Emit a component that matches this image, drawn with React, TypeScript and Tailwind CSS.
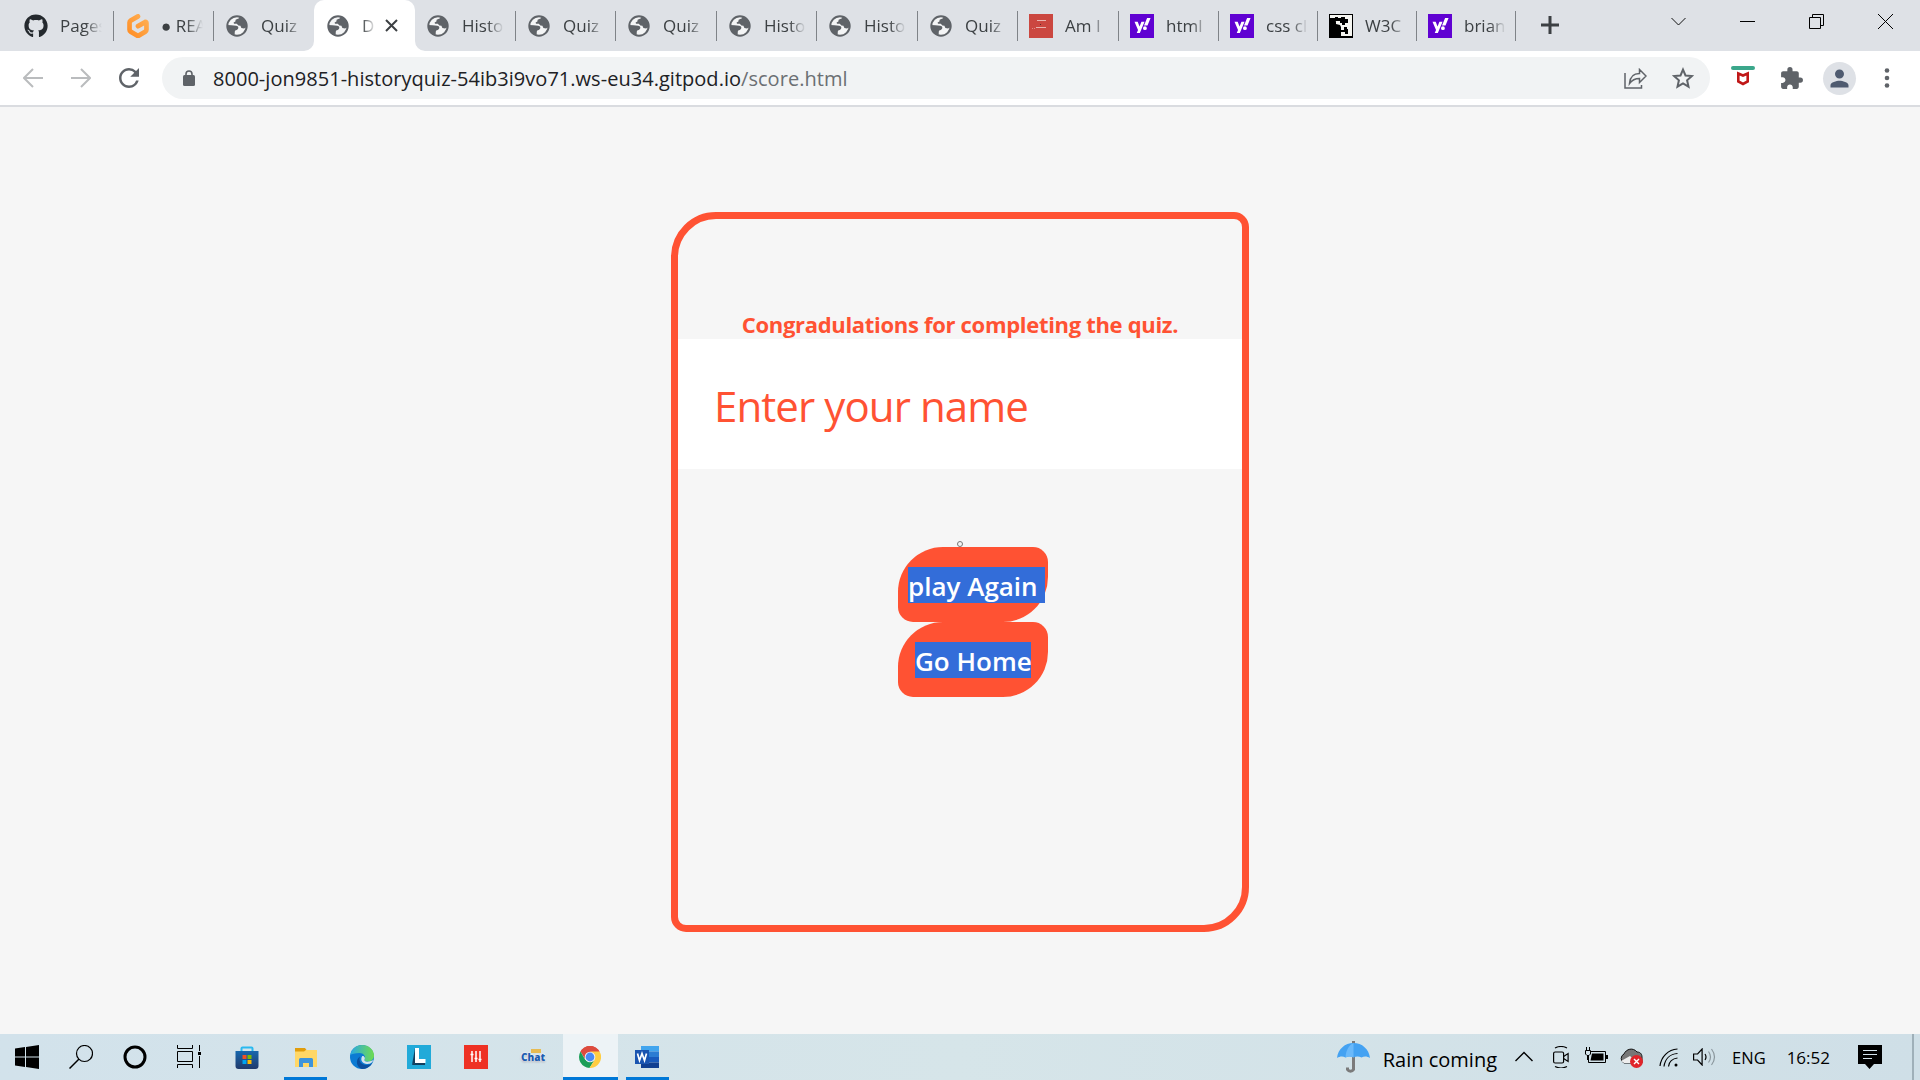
import { type ReactNode } from "react";
import { SiGitpod } from "react-icons/si";
import { FaGithub, FaYahoo } from "react-icons/fa";
import { MdExtension, MdPerson, MdRefresh } from "react-icons/md";

function Globe() {
  return (
    <svg className="ml-px size-[22px]" viewBox="0 0 22 22" fill="#5f6368">
      <circle cx="11" cy="11" r="9.7" fill="#f4f5f6" stroke="#5f6368" strokeWidth="2" />
      <path d="M1 10 L5.5 10.2 L10.2 10.8 C12.6 11 13 13.4 11.4 14.6 C10.6 15.3 9.2 15.2 8.8 16.4 L8.6 20.6 C4 19.4 1 15 1 10Z" />
      <path d="M13.6 1.5 L13 3.2 L9.6 4.8 L9.4 6.6 L7.6 7.4 L8 8.8 L10.8 8.8 L12.4 10.4 L14.4 10.8 L15.4 13 L18 13.4 L21 12 C21.3 7 18 2.6 13.6 1.5Z" />
    </svg>
  );
}

function Yahoo() {
  return (
    <div className="flex size-6 items-center justify-center bg-[#6001d2]">
      <FaYahoo className="size-[17px] text-white" />
    </div>
  );
}

function Gitpod() {
  return (
    <>
      <svg className="absolute size-0">
        <linearGradient id="gitpod" x1="1" y1="0" x2="0" y2="1">
          <stop stopColor="#ffb45b" />
          <stop offset="1" stopColor="#ff8a1f" />
        </linearGradient>
      </svg>
      <SiGitpod className="ml-px size-6 fill-[url(#gitpod)]" />
    </>
  );
}

function RedMark() {
  return (
    <svg className="size-6" viewBox="0 0 24 24">
      <path fill="#cb4740" d="M0 0h24v24H0z" />
      <path stroke="#e9b5b0" d="M8 6.500h9M7 13.500h10" />
      <path stroke="#5c2a27" d="M11 10.500h1" />
      <path stroke="#e08a85" strokeDasharray="1 1" d="M3 14.500h4" />
    </svg>
  );
}

function W3CMark() {
  return (
    <svg className="size-6" viewBox="0 0 24 24">
      <path d="M0 0h24v24H0z" />
      <path fill="#f6f6f2" d="M1 1h22v21H12v-9l-1-2-4-1V8l-1-4H1z" />
      <path d="M6 3h3v1h3V3h4v2h3v4h-3v2h-3V9h-2V7H6zM15 13h3v2h1v5h-3v-2h-4v-2h3z" />
    </svg>
  );
}

type Tab = { icon: ReactNode; title: string; width: string; pad?: string; active?: boolean; line?: boolean };

const tabs: Tab[] = [
  { icon: <FaGithub className="size-6 text-[#24292e]" />, title: "Pages", width: "w-[114px]", pad: "pl-6", line: true },
  { icon: <Gitpod />, title: "● REA", width: "w-[100px]", pad: "pl-[11px]", line: true },
  { icon: <Globe />, title: "Quiz", width: "w-[100px]", pad: "pl-[11px]" },
  { icon: <Globe />, title: "D", width: "w-[101px]", active: true },
  { icon: <Globe />, title: "Histo", width: "w-[101px]", pad: "pl-[11px]", line: true },
  { icon: <Globe />, title: "Quiz", width: "w-[100px]", pad: "pl-[11px]", line: true },
  { icon: <Globe />, title: "Quiz", width: "w-[101px]", pad: "pl-[11px]", line: true },
  { icon: <Globe />, title: "Histo", width: "w-[100px]", pad: "pl-[11px]", line: true },
  { icon: <Globe />, title: "Histo", width: "w-[101px]", pad: "pl-[11px]", line: true },
  { icon: <Globe />, title: "Quiz", width: "w-[100px]", pad: "pl-[11px]", line: true },
  { icon: <RedMark />, title: "Am I", width: "w-[101px]", pad: "pl-[11px]", line: true },
  { icon: <Yahoo />, title: "html", width: "w-[100px]", pad: "pl-[11px]", line: true },
  { icon: <Yahoo />, title: "css cl", width: "w-[99px]", pad: "pl-[11px]", line: true },
  { icon: <W3CMark />, title: "W3C", width: "w-[99px]", pad: "pl-[11px]", line: true },
  { icon: <Yahoo />, title: "brian", width: "w-[99px]", pad: "pl-[11px]", line: true },
];

function TabItem({ tab }: { tab: Tab }) {
  if (tab.active) {
    return (
      <div className="relative flex h-full w-[101px] items-center rounded-t-[10px] bg-white pl-3">
        <svg className="absolute bottom-0 -left-[10px] size-[10px]" viewBox="0 0 10 10"><path fill="#fff" d="M10 0v10H0A10 10 0 0 0 10 0Z" /></svg>
        <svg className="absolute -right-[10px] bottom-0 size-[10px]" viewBox="0 0 10 10"><path fill="#fff" d="M0 0v10h10A10 10 0 0 1 0 0Z" /></svg>
        <div className="flex w-9 shrink-0"><Globe /></div>
        <span className="w-3 overflow-hidden text-[#3c4043] [mask-image:linear-gradient(to_right,black,rgba(0,0,0,.15))]">{tab.title}</span>
        <svg className="ml-[11px] size-[13px]" viewBox="0 0 13 13" stroke="#3c4043" strokeWidth="2"><path d="M1 1l11 11M12 1L1 12" /></svg>
      </div>
    );
  }
  return (
    <div className={`flex h-full shrink-0 items-center ${tab.width} ${tab.pad ?? "pl-3"}`}>
      <div className="w-9 shrink-0">{tab.icon}</div>
      <div className="w-[42px] overflow-hidden whitespace-nowrap text-[#3c4043] [mask-image:linear-gradient(to_right,black_60%,transparent)]">
        {tab.title}
      </div>
      {tab.line && <div className="ml-auto h-[30px] w-px bg-[#7f8388]" />}
    </div>
  );
}

function TabStrip() {
  return (
    <div className="flex h-[51px] bg-[#dee1e6] font-['Open_Sans',sans-serif] text-[17px] leading-6">
      {tabs.map((tab, i) => <TabItem key={i} tab={tab} />)}
      <svg className="mt-4 ml-[25px] size-[18px]" viewBox="0 0 18 18" stroke="#3c4043" strokeWidth="3"><path d="M9 0v18M0 9h18" /></svg>
      <div className="mr-[27px] ml-auto flex items-start gap-[54px] pt-3.5">
        <svg className="size-[15px]" viewBox="0 0 15 15" fill="none" stroke="#111"><path d="M0.500 4l7 7 7-7" /></svg>
        <svg className="size-[15px]" viewBox="0 0 15 15" fill="none" stroke="#000"><path d="M0 7.500h15" /></svg>
        <svg className="size-[15px]" viewBox="0 0 15 15" fill="none" stroke="#000"><path d="M.5 3.500h11v11h-11zM3.500 3V.5h11v11H12" /></svg>
        <svg className="size-[15px]" viewBox="0 0 15 15" fill="none" stroke="#000"><path d="M0 0l15 15M15 0L0 15" /></svg>
      </div>
    </div>
  );
}

function Toolbar() {
  return (
    <div className="flex h-14 items-start border-b-2 border-[#dadce0] bg-white pt-1.5">
      <div className="flex h-[42px] w-[162px] shrink-0 items-center">
        <svg className="ml-[23px] size-5" viewBox="0 0 20 20" fill="none" stroke="#babcbe" strokeWidth="2"><path d="M20 10H1.500M10 1L1 10l9 9" /></svg>
        <svg className="ml-7 size-5" viewBox="0 0 20 20" fill="none" stroke="#babcbe" strokeWidth="2"><path d="M0 10h18.500M10 1l9 9-9 9" /></svg>
        <MdRefresh className="ml-[23px] size-[30px] text-[#5f6368]" />
      </div>
      <div className="flex h-[42px] w-[1548px] shrink-0 items-center rounded-full bg-[#f1f3f4] pl-[21px]">
        <svg className="h-4 w-3" viewBox="0 0 12 16"><rect y="5" width="12" height="11" rx="1.500" fill="#5f6368" /><path d="M3 6V4a3 3 0 0 1 6 0v2" fill="none" stroke="#5f6368" strokeWidth="1.600" /></svg>
        <span className="ml-[18px] pt-0.5 font-['Open_Sans',sans-serif] text-[20px] leading-7 tracking-[0.03px] whitespace-pre text-[#202124]">
          8000-jon9851-historyquiz-54ib3i9vo71.ws-eu34.gitpod.io<span className="text-[#6b6f73]">/score.html</span>
        </span>
        <svg className="ml-auto h-[21px] w-[23px]" viewBox="0 0 23 21" fill="none" stroke="#5f6368" strokeWidth="1.500"><path d="M1 5v15h16.500v-3M5.500 15.500C6 9 9.500 5.500 15.500 5.500V1.500l6.500 6.500-6.500 6.500V10.500C11 10.500 8 12 5.500 15.500Z" /></svg>
        <svg className="mr-4 ml-[25px] size-[22px]" viewBox="0 0 22 22" fill="none" stroke="#5f6368" strokeWidth="2"><path d="M11 2.600l2.500 5.900 6.400.6-4.800 4.200 1.400 6.300L11 16.300l-5.500 3.300 1.400-6.300-4.800-4.200 6.400-.6z" /></svg>
      </div>
      <svg className="mt-[9px] ml-[21px] h-[20px] w-[24px]" viewBox="0 0 24 20"><rect width="24" height="4" rx="2" fill="#3ba78b" /><path d="M7.300 7.500l4.700 2 4.700-2v8L12 18l-4.700-2.500z" fill="none" stroke="#c01818" strokeWidth="2.600" /></svg>
      <MdExtension className="mt-[9px] ml-6 size-[25px] text-[#5f6368]" />
      <div className="mt-[5px] ml-[19px] flex size-[33px] items-center justify-center rounded-full bg-[#dee1e6]"><MdPerson className="size-[27px] text-[#4f5b70]" /></div>
      <svg className="mt-[11px] ml-7 h-5 w-[6px]" viewBox="0 0 6 20" fill="#5f6368"><circle cx="3" cy="2.500" r="2.300" /><circle cx="3" cy="10" r="2.300" /><circle cx="3" cy="17.500" r="2.300" /></svg>
    </div>
  );
}

function QuizPage() {
  return (
    <main className="h-[927px] bg-[#f6f6f6] pt-[105px] font-['Open_Sans',sans-serif]">
      <div className="ml-[671px] flex h-[720px] w-[578px] flex-col rounded-tl-[45px] rounded-tr-[15px] rounded-br-[45px] rounded-bl-[15px] border-[7px] border-[#ff5233]">
        <h2 className="mt-[90px] text-center text-[22px] leading-[30px] font-bold tracking-[-0.31px] whitespace-nowrap text-[#ff5233]">Congradulations for completing the quiz.</h2>
        <div className="h-[130px] bg-white pt-[6px] pl-9 text-[42px] leading-[122px] tracking-[-0.9px] text-[#ff5233]">Enter your name</div>
        <div className="mt-[72px] ml-[279px] size-[6px] rounded-full border border-[#777]" />
        <div className="ml-[220px] flex w-[150px] flex-col text-[26px] leading-9 font-semibold text-white">
          <button className="flex h-[75px] items-start rounded-tl-[45px] rounded-tr-[15px] rounded-br-[45px] rounded-bl-[15px] bg-[#ff5233] pt-5 pl-[10px]">
            <span className="h-9 w-[137px] shrink-0 bg-[#336dd9] pt-px text-left whitespace-pre">play Again </span>
          </button>
          <button className="flex h-[75px] items-start rounded-tl-[45px] rounded-tr-[15px] rounded-br-[45px] rounded-bl-[15px] bg-[#ff5233] pt-5 pl-[17px]">
            <span className="h-9 w-[116px] shrink-0 bg-[#336dd9] pt-px text-left whitespace-pre">Go Home</span>
          </button>
        </div>
      </div>
    </main>
  );
}

function Taskbar() {
  return (
    <footer className="flex h-[46px] bg-linear-to-r from-[#d2e2eb] via-[#d6e5e9] to-[#cfdfe7] font-['Open_Sans',sans-serif] text-black">
      <svg className="mt-[11px] ml-[15px] size-6" viewBox="0 0 24 24"><path d="M0 3.500L10 2v9.500H0zM11 1.900L24 0v11.500H11zM0 12.500h10V22L0 20.500zM11 12.500h13V24l-13-1.900z" /></svg>
      <svg className="mt-[11px] ml-[30px] size-6" viewBox="0 0 24 24" fill="none" stroke="#000" strokeWidth="1.200"><circle cx="15.500" cy="8.500" r="8" /><path d="M10 14L0.500 23.500" strokeWidth="1.500" /></svg>
      <svg className="mt-[11px] ml-[30px] size-6" viewBox="0 0 24 24" fill="none" stroke="#000" strokeWidth="3"><circle cx="12" cy="12" r="10" /></svg>
      <svg className="mt-[11px] ml-[30px] size-6" viewBox="0 0 24 24" fill="none" stroke="#000"><path d="M.5 0v3.500h15V0M.5 6.500h15v10H.500zM.5 23v-3.500h15V23M22.500 0v6M22.500 11v12" /><path d="M21 7h3v3h-3z" fill="#000" stroke="none" /></svg>
      <svg className="mt-[11px] ml-[34px] size-6" viewBox="0 0 24 24"><defs><linearGradient id="store" x1="0" y1="0" x2="0" y2="1"><stop stopColor="#1767ae" /><stop offset="1" stopColor="#213a6b" /></linearGradient></defs><path d="M6.500 7V3.500a1 1 0 0 1 1-1h9a1 1 0 0 1 1 1V7" fill="none" stroke="#29b9f0" strokeWidth="2" /><path d="M.500 6h23v15a3 3 0 0 1-3 3h-17a3 3 0 0 1-3-3z" fill="url(#store)" /><path fill="#f25022" d="M7.500 10h4v4h-4z" /><path fill="#7fba00" d="M12.500 10h4v4h-4z" /><path fill="#00a4ef" d="M7.500 15h4v4h-4z" /><path fill="#ffb900" d="M12.500 15h4v4h-4z" /></svg>
      <div className="ml-[25px] flex h-full w-[43px] flex-col items-center justify-between border-b-[3px] border-[#0078d7] pt-3">
        <svg className="h-[22px] w-[22px]" viewBox="0 0 22 22"><path fill="#e19d0c" d="M0 2h10l1.500 2-1.500 2H0z" /><path fill="#ffd766" d="M0 5.500h9l2-1.500h11v17H0z" /><path fill="#3c94dc" d="M4 21v-7.500a1.500 1.500 0 0 1 1.500-1.500h11a1.500 1.500 0 0 1 1.500 1.500V21h-4v-4H8v4z" /></svg>
      </div>
      <svg className="mt-[11px] ml-[23px] size-6" viewBox="0 0 24 24"><defs><linearGradient id="edge" x1="0" y1="0" x2="1" y2="0"><stop stopColor="#2aa8e6" /><stop offset="1" stopColor="#6fdc4c" /></linearGradient></defs><circle cx="12" cy="12" r="12" fill="#0c7bd3" /><path d="M.300 10C1.500 4 6.200 0 12 0c7 0 12 5 12 10.500 0 4-3 6-6.500 6-2.500 0-3.500-1-3-2 2-3-1-6.500-5-6.500C5 8 1.500 9 .300 10Z" fill="url(#edge)" /><path d="M10 11.500c-2 5 2 9 7 8.500 2 0 4-1 5.200-2C20 22 16 24 12 24c-5-1-7.500-9-2-12.500Z" fill="#0b4f9e" /><path d="M14.500 14.500c-1 2 3 3.500 9 .5-1.500 3.500-4 4-6.500 4-4.500 0-7-4-5-7.500 1-1.500 4 1 2.500 3Z" fill="#d4e3eb" /></svg>
      <svg className="mt-[11px] ml-[33px] size-6" viewBox="0 0 24 24"><path fill="#21aad9" d="M0 0h24v24H0z" /><path d="M8 3L5 20l3-2z" fill="#123f5e" /><path d="M5 20l4-3h9v3z" fill="#123f5e" /><path d="M8 3h4v11h6.500v4H8z" fill="#fff" /></svg>
      <svg className="mt-[11px] ml-[33px] size-6" viewBox="0 0 24 24"><path fill="#ee3124" d="M0 0h24v24H0z" /><path d="M8 6v11M12 6v11M16 6v11" stroke="#fff" strokeWidth="1.500" /><path d="M6.500 9.500h3M10.500 13.500h3M14.500 14.500h3" stroke="#fff" strokeWidth="1.500" /></svg>
      <div className="mt-[15px] ml-[33px] flex h-5 w-6 flex-col items-center"><span className="h-[4px] w-[10px] translate-x-[3px] bg-[#e7bb52]" /><span className="text-[10px] leading-[8px] font-extrabold text-[#1c5cb0] [text-shadow:0_0_2px_#fff,0_0_2px_#fff,0_1px_2px_#889]">Chat</span></div>
      <div className="ml-[18px] flex h-full w-[55px] justify-center border-b-[3px] border-[#0078d7] bg-[#edf3f6] pt-3 pr-0.5">
        <svg className="size-[22px]" viewBox="0 0 22 22"><path fill="#dd4b3e" d="M11 11L1.500 5.500A11 11 0 0 1 20.500 5.500z" /><path fill="#dd4b3e" d="M11 5.500h9.500A11 11 0 0 0 1.500 5.500L6 13z" /><path fill="#1c9e58" d="M1.500 5.500A11 11 0 0 0 10.500 22L15.800 13.500 11 14 6.200 13.700z" /><path fill="#ffcd42" d="M20.500 5.500A11 11 0 0 1 10.500 22L15.800 13.700 15.500 8 11 5.500z" /><circle cx="11" cy="11" r="5.300" fill="#f3f5f5" /><circle cx="11" cy="11" r="4.400" fill="#4a8af4" /></svg>
      </div>
      <div className="ml-2 flex h-full w-[43px] justify-center border-b-[3px] border-[#0078d7] pt-3 pr-0.5">
        <svg className="h-[22px] w-6" viewBox="0 0 24 22"><path fill="#41a5ee" d="M6 0h18v5.500H6z" /><path fill="#2b7cd3" d="M6 5.500h18V11H6z" /><path fill="#185abd" d="M6 11h18v5.500H6z" /><path fill="#103f91" d="M6 16.500h18V22H6z" /><path fill="#1a54b0" d="M0 4h14v14H0z" /><path d="M2.500 7.500l2 7 2.500-7 2.500 7 2-7" fill="none" stroke="#fff" strokeWidth="1.700" /></svg>
      </div>
      <svg className="mt-[6px] ml-auto h-[35px] w-[33px] shrink-0" viewBox="0 0 33 35"><path d="M16.500 1v28.500a3.500 3.500 0 0 1-6 0v-2" fill="none" stroke="#7b7b7b" strokeWidth="3" /><path d="M0 18C1 9 8 3 16.500 3S32 9 33 18c-3-2-6-2-8.500-.5C22 16 19 16 16.500 17.500 14 16 11 16 8.500 17.500 6 16 3 16 0 18Z" fill="#44a2f2" /><path d="M8.500 17.500C9 10 12 5 16.500 3v14.500C14 16 11 16 8.500 17.500Z" fill="#6bb9fa" /></svg>
      <span className="mt-[11px] ml-[13px] text-[20px] leading-[30px] whitespace-nowrap">Rain coming</span>
      <svg className="mt-[17px] ml-[18px] h-[11px] w-[18px]" viewBox="0 0 18 11" fill="none" stroke="#000" strokeWidth="1.400"><path d="M.5 10L9 1.500l8.500 8.500" /></svg>
      <svg className="mt-[12px] ml-5 h-[22px] w-[16px]" viewBox="0 0 16 22" fill="none" stroke="#000" strokeWidth="1.200"><rect x=".6" y="6" width="10" height="11" rx="1.500" /><path d="M10.600 10.500l4.500-3v8l-4.500-3M2 2q6-3 12 0M2 20.500q6 3 12 0" /></svg>
      <svg className="mt-[13px] ml-[15px] h-[17px] w-6" viewBox="0 0 24 17"><path d="M6 4.500h15.500v11H4.500v-4" fill="none" stroke="#000" /><path d="M8 6.500h11.500v7H6.500z" /><path d="M22 8h2v4h-2zM3 9h2v4H3zM2 0h1v4H2zM5 0h1v4H5z" /><path d="M1.500 3.500h5V7L5 8.500H3L1.500 7z" fill="#d4e3eb" stroke="#000" /></svg>
      <svg className="mt-[14px] ml-[11px] h-5 w-[25px]" viewBox="0 0 25 20"><path d="M5 15a5 5 0 0 1 0-9C7 1 14-1 18 4c4 0 5 3 5 5v6z" fill="#777" stroke="#111" /><path d="M2 13l9-5 8 7H5z" fill="#eee" /><circle cx="17.500" cy="13.500" r="6.500" fill="#e0242a" /><path d="M15 11l5 5M20 11l-5 5" stroke="#fff" strokeWidth="1.400" /></svg>
      <svg className="mt-[14px] ml-[15px] h-5 w-5" viewBox="0 0 20 20" fill="none" stroke="#000" strokeWidth="1.200"><path d="M1 18C2 9 9 1.500 18.500 1M5 18.500C6 11 11 6 18.500 5.500M9.500 18.500C10 14 13.500 10.500 18.500 10" /><circle cx="17" cy="17" r="1.500" fill="#000" stroke="none" /></svg>
      <svg className="mt-[14px] ml-[14px] h-[18px] w-[23px]" viewBox="0 0 23 18" fill="none" stroke="#000" strokeWidth="1.200"><path d="M.6 6h4l4.500-5v16l-4.500-5h-4zM12 6q2 3 0 6" /><path d="M15.500 3.500q4 5.500 0 11M18.500 1q6 8 0 16" stroke="#8b979d" /></svg>
      <span className="mt-[11px] ml-[16px] text-[16.500px] leading-[26px]">ENG</span>
      <span className="mt-[11px] ml-[21px] text-[17px] leading-[26px]">16:52</span>
      <svg className="mt-[11px] ml-7 size-6" viewBox="0 0 24 24"><path d="M0 0h24v19h-8l-4.500 5L7 19H0z" /><path d="M5 5.500h14M5 9.500h14M5 13.500h9" stroke="#d4e3eb" /></svg>
      <div className="ml-[30px] w-2 border-l-2 border-[#9fb0b9]" />
    </footer>
  );
}

export default function App() {
  return (
    <div className="flex h-[1080px] w-[1920px] flex-col overflow-hidden">
      <TabStrip />
      <Toolbar />
      <QuizPage />
      <Taskbar />
    </div>
  );
}
